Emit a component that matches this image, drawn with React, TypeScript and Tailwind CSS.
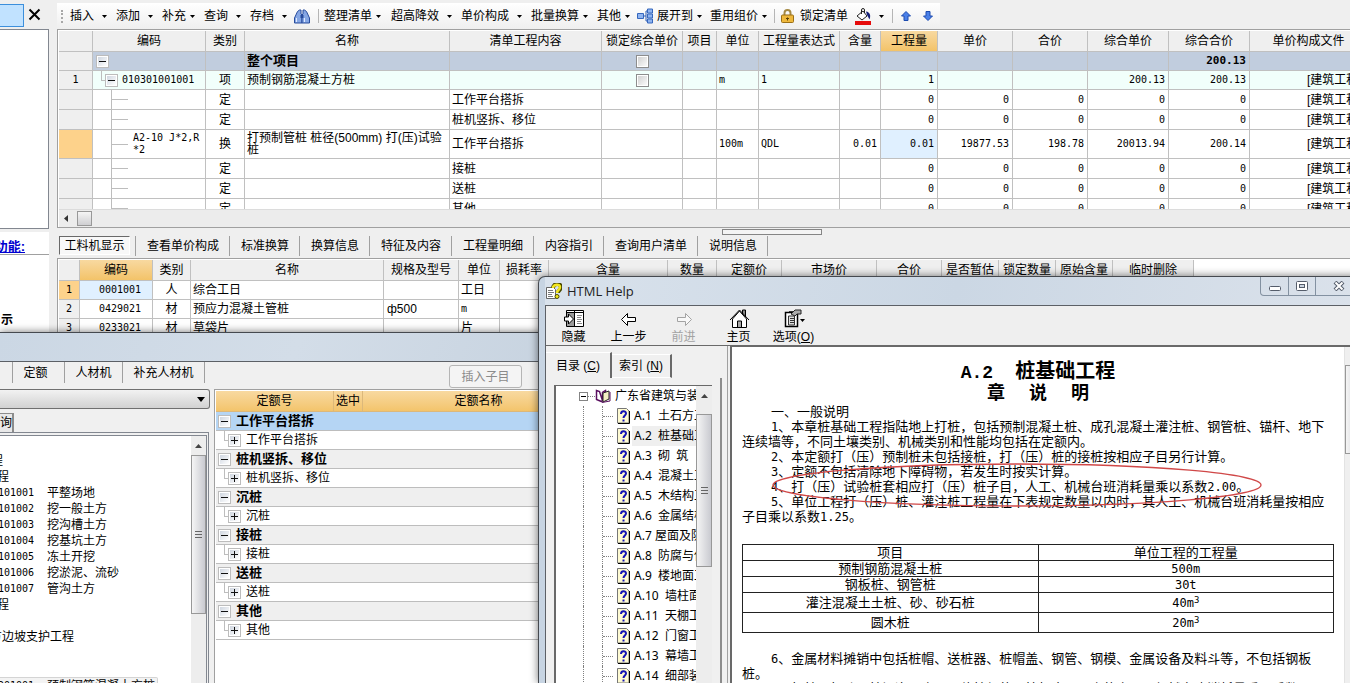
import type { ReactNode } from "react";
import clsx from "clsx";

const tools = [
  { label: "插入", width: "w-[46px]", gap: "gap-2" },
  { label: "添加", width: "w-[46px]", gap: "gap-2" },
  { label: "补充", width: "w-[42px]", gap: "gap-1" },
  { label: "查询", width: "w-[46px]", gap: "gap-2" },
  { label: "存档", width: "w-[44px]", gap: "gap-2" },
];

const moreTools = [
  { label: "整理清单", width: "w-[67px]", gap: "gap-1" },
  { label: "超高降效", width: "w-[70px]", gap: "gap-2" },
  { label: "单价构成", width: "w-[70px]", gap: "gap-2" },
  { label: "批量换算", width: "w-[66px]", gap: "gap-1" },
  { label: "其他", width: "w-[40px]", gap: "gap-1" },
];

const billColumns = [
  { title: "", width: "w-[34px]" },
  { title: "编码", width: "w-[113px]" },
  { title: "类别", width: "w-[39px]" },
  { title: "名称", width: "w-[205px]" },
  { title: "清单工程内容", width: "w-[152px]" },
  { title: "锁定综合单价", width: "w-[81px]" },
  { title: "项目", width: "w-[34px]" },
  { title: "单位", width: "w-[42px]" },
  { title: "工程量表达式", width: "w-[81px]" },
  { title: "含量", width: "w-[41px]" },
  { title: "工程量", width: "w-[57px]", active: true },
  { title: "单价", width: "w-[75px]" },
  { title: "合价", width: "w-[75px]" },
  { title: "综合单价", width: "w-[81px]" },
  { title: "综合合价", width: "w-[81px]" },
  { title: "单价构成文件", width: "w-[118px]" },
];

type BillRow = {
  level: "root" | "item" | "quota";
  no?: string;
  code?: ReactNode;
  kind?: string;
  name?: ReactNode;
  content?: string;
  unit?: string;
  expr?: string;
  ratio?: string;
  nums: string[];
  file?: string;
  current?: boolean;
};

const zeros = ["0", "0", "0", "0", "0"];

const billRows: BillRow[] = [
  { level: "root", name: "整个项目", nums: ["", "", "", "", "200.13"] },
  {
    level: "item",
    no: "1",
    code: "010301001001",
    kind: "项",
    name: "预制钢筋混凝土方桩",
    unit: "m",
    expr: "1",
    nums: ["1", "", "", "200.13", "200.13"],
    file: "[建筑工程]",
  },
  { level: "quota", kind: "定", content: "工作平台搭拆", nums: zeros, file: "[建筑工程]" },
  { level: "quota", kind: "定", content: "桩机竖拆、移位", nums: zeros, file: "[建筑工程]" },
  {
    level: "quota",
    code: (
      <>
        A2-10 J*2,R
        <br />
        *2
      </>
    ),
    kind: "换",
    name: (
      <>
        打预制管桩 桩径(500mm) 打(压)试验
        <br />桩
      </>
    ),
    content: "工作平台搭拆",
    unit: "100m",
    expr: "QDL",
    ratio: "0.01",
    nums: ["0.01", "19877.53", "198.78", "20013.94", "200.14"],
    file: "[建筑工程]",
    current: true,
  },
  { level: "quota", kind: "定", content: "接桩", nums: zeros, file: "[建筑工程]" },
  { level: "quota", kind: "定", content: "送桩", nums: zeros, file: "[建筑工程]" },
  { level: "quota", kind: "定", content: "其他", nums: zeros, file: "[建筑工程]" },
];

const detailTabs = [
  "查看单价构成",
  "标准换算",
  "换算信息",
  "特征及内容",
  "工程量明细",
  "内容指引",
  "查询用户清单",
  "说明信息",
];

const resourceColumns = [
  { title: "", width: "w-[21px]" },
  { title: "编码", width: "w-[73px]", active: true },
  { title: "类别", width: "w-[38px]" },
  { title: "名称", width: "w-[193px]" },
  { title: "规格及型号", width: "w-[75px]" },
  { title: "单位", width: "w-[41px]" },
  { title: "损耗率", width: "w-[49px]" },
  { title: "含量", width: "w-[119px]" },
  { title: "数量", width: "w-[49px]" },
  { title: "定额价", width: "w-[65px]" },
  { title: "市场价", width: "w-[95px]" },
  { title: "合价", width: "w-[65px]" },
  { title: "是否暂估", width: "w-[57px]" },
  { title: "锁定数量", width: "w-[57px]" },
  { title: "原始含量", width: "w-[57px]" },
  { title: "临时删除", width: "w-[81px]" },
];

const resources = [
  { code: "0001001", kind: "人", name: "综合工日", spec: "", unit: "工日" },
  { code: "0429021", kind: "材", name: "预应力混凝土管桩", spec: "ф500", unit: "m" },
  { code: "0233021", kind: "材", name: "草袋片", spec: "", unit: "片" },
];

const quotaGroups = ["工作平台搭拆", "桩机竖拆、移位", "沉桩", "接桩", "送桩", "其他"];

const listItems = [
  { code: "101001", name: "平整场地" },
  { code: "101002", name: "挖一般土方" },
  { code: "101003", name: "挖沟槽土方" },
  { code: "101004", name: "挖基坑土方" },
  { code: "101005", name: "冻土开挖" },
  { code: "101006", name: "挖淤泥、流砂" },
  { code: "101007", name: "管沟土方" },
];

const chapters = [
  ["A.1", "土石方工程"],
  ["A.2", "桩基础工程"],
  ["A.3", "砌  筑"],
  ["A.4", "混凝土工程"],
  ["A.5", "木结构工程"],
  ["A.6", "金属结构"],
  ["A.7", "屋面及防水"],
  ["A.8", "防腐与保温"],
  ["A.9", "楼地面工程"],
  ["A.10", "墙柱面工程"],
  ["A.11", "天棚工程"],
  ["A.12", "门窗工程"],
  ["A.13", "幕墙工程"],
  ["A.14", "细部装饰"],
];

const monoFamily = "font-['DejaVu_Sans_Mono','Noto_Sans_CJK_SC',monospace]";
const mono = `${monoFamily} text-[10px]`;
const headActive = "bg-linear-to-b from-[#f8d9a0] to-[#f3c368]";

function Caret() {
  return (
    <svg width="5" height="3" viewBox="0 0 5 3" aria-hidden="true">
      <path d="M0 0h5L2.5 3z" fill="#000" />
    </svg>
  );
}

function ToolButton({ label, width, gap }: { label: string; width: string; gap: string }) {
  return (
    <button type="button" className={clsx("flex shrink-0 items-center", width, gap)}>
      {label}
      <Caret />
    </button>
  );
}

function Divider() {
  return <span className="h-[14px] w-px shrink-0 bg-[#b5b5b5]" />;
}

function Toggle({ open, label }: { open: boolean; label: string }) {
  return (
    <button
      type="button"
      aria-label={label}
      aria-expanded={open}
      className="size-[13px] shrink-0 border border-[#bcbcbc] bg-white p-px"
    >
      <svg width="9" height="9" viewBox="0 0 9 9" className="bg-linear-to-br from-[#cfd6e0] to-white">
        <path d={open ? "M1 4.5h7" : "M1 4.5h7M4.5 1v7"} stroke="#111" fill="none" />
      </svg>
    </button>
  );
}

function LockBox({ label }: { label: string }) {
  return (
    <input
      type="checkbox"
      aria-label={label}
      className="size-[13px] appearance-none border border-[#8d8d8d] bg-linear-to-br from-[#cdcdcd] to-white shadow-[inset_0_0_0_1px_#fff]"
    />
  );
}

function Toolbar() {
  return (
    <div className="mt-[3px] flex h-[26px] w-[883px] shrink-0 items-center bg-linear-to-b from-white to-[#efefef] pl-1 whitespace-nowrap">
      <span className="mr-[7px] h-[13px] w-[2px] border-l-2 border-dotted border-[#a8a8a8]" />
      {tools.map((tool) => (
        <ToolButton key={tool.label} {...tool} />
      ))}
      <button type="button" aria-label="查找" className="mr-2 shrink-0">
        <svg width="16" height="15" viewBox="0 0 16 15">
          <path d="M3.500 2.500l2-1.500h1.500v4l1 1v8H.5V9z" fill="#86a7e4" stroke="#274b9c" />
          <path d="M12.500 2.500L10.500 1H9v4L8 6v8h7.500V9z" fill="#86a7e4" stroke="#274b9c" />
          <path d="M6.500 6h3v3h-3z" fill="#274b9c" />
          <path d="M2.500 9v4M10.500 9v4" stroke="#dfe9ff" />
        </svg>
      </button>
      <Divider />
      <span className="w-[5px] shrink-0" />
      {moreTools.map((tool) => (
        <ToolButton key={tool.label} {...tool} />
      ))}
      <svg width="16" height="16" viewBox="0 0 16 16" className="mr-1 shrink-0" aria-hidden="true">
        <path d="M6 8h3M9 8V3h1M9 8v5h1" stroke="#2f5fb5" fill="none" />
        <path d="M.5 5.500h6v5h-6zM10.500 1h5v4h-5zM10.500 6h5v4h-5zM10.500 11h5v4h-5z" fill="#8fb4f0" stroke="#3566bd" />
      </svg>
      <ToolButton label="展开到" width="w-[53px]" gap="gap-1" />
      <ToolButton label="重用组价" width="w-[64px]" gap="gap-1" />
      <Divider />
      <button type="button" className="ml-[6px] flex shrink-0 items-center gap-[6px]">
        <svg width="13" height="14" viewBox="0 0 13 14" aria-hidden="true">
          <path d="M3.500 7V4a3 3 0 0 1 6 0v3" fill="none" stroke="#a58a45" strokeWidth="2" />
          <rect x=".5" y="6" width="12" height="7.500" rx="1" fill="#eeb83c" stroke="#9a6f16" />
          <path d="M6.500 8.500v3M5 9.500h3" stroke="#5d3f04" />
        </svg>
        锁定清单
      </button>
      <button type="button" aria-label="填充颜色" className="ml-[7px] flex shrink-0 items-center gap-2">
        <svg width="16" height="17" viewBox="0 0 16 17">
          <path d="M2 8l6-5 4 5-5 4z" fill="#fff" stroke="#222" />
          <path d="M6.500 6V2a1.500 1.500 0 0 1 3 0v3" fill="none" stroke="#222" />
          <path d="M11 3.500c4 .5 5 4 3.500 8L12 7z" fill="#16217a" />
          <path d="M0 13h16v4H0z" fill="#e60b0b" />
        </svg>
        <Caret />
      </button>
      <span className="ml-2" />
      <Divider />
      <button type="button" aria-label="上移" className="ml-[8px] shrink-0">
        <svg width="10" height="10" viewBox="0 0 10 10">
          <path d="M5 .5L9.500 5H7v4.500H3V5H.5z" fill="#4a80e8" stroke="#1c4bb0" />
        </svg>
      </button>
      <button type="button" aria-label="下移" className="ml-[12px] shrink-0">
        <svg width="10" height="10" viewBox="0 0 10 10">
          <path d="M5 9.500L.5 5H3V.5h4V5h2.500z" fill="#4a80e8" stroke="#1c4bb0" />
        </svg>
      </button>
    </div>
  );
}

function CodeCell({ row, height }: { row: BillRow; height: string }) {
  if (row.level === "root") {
    return (
      <div className={clsx("flex items-center pl-[3px]", height)}>
        <Toggle open label="整个项目" />
      </div>
    );
  }
  if (row.level === "item") {
    return (
      <div className={clsx("flex items-center pl-2", height)}>
        <span className="h-[10px] w-[4px] self-start border-b border-l border-[#bdbdbd]" />
        <Toggle open label="预制钢筋混凝土方桩" />
        <span className="ml-[4px]">{row.code}</span>
      </div>
    );
  }
  return (
    <div className={clsx("flex items-center pl-[18px] leading-3", height)}>
      <span className="w-px self-stretch bg-[#bdbdbd]" />
      <span className="h-px w-4 shrink-0 bg-[#bdbdbd]" />
      <span className="ml-[5px] whitespace-nowrap">{row.code}</span>
    </div>
  );
}

function BillTable() {
  const cell = "border-r border-b border-[#c0c0c0] p-0";
  return (
    <table className="w-[1309px] table-fixed border-separate border-spacing-0 leading-[14px] whitespace-nowrap">
      <thead>
        <tr>
          {billColumns.map((col) => (
            <th
              key={col.title}
              className={clsx(cell, "h-[21px] font-normal", col.width, col.active ? headActive : "bg-[#efefef]")}
            >
              {col.title}
            </th>
          ))}
        </tr>
      </thead>
      <tbody>
        {billRows.map((row, i) => {
          const height = row.current ? "h-[28px]" : row.level === "quota" ? "h-[19px]" : "h-[18px]";
          return (
            <tr
              key={i}
              className={clsx(
                row.level === "root" && "bg-[#c1cdde] font-bold",
                row.level === "item" && "bg-[#f1fffb]",
                row.level === "quota" && "bg-white"
              )}
            >
              <td className={clsx(cell, mono, "text-center", row.current ? "bg-[#fdd28b]" : "bg-[#efefef]")}>
                {row.no}
              </td>
              <td className={clsx(cell, mono)}>
                <CodeCell row={row} height={height} />
              </td>
              <td className={clsx(cell, "text-center")}>{row.kind}</td>
              <td className={clsx(cell, "pl-[2px] leading-3", row.level === "root" && "text-[13px]")}>{row.name}</td>
              <td className={clsx(cell, "pl-[2px]")}>{row.content}</td>
              <td className={cell}>
                <div className="flex justify-center">
                  {row.level !== "quota" && <LockBox label="锁定综合单价" />}
                </div>
              </td>
              <td className={cell} />
              <td className={clsx(cell, mono, "pl-[2px]")}>{row.unit}</td>
              <td className={clsx(cell, mono, "pl-[2px]")}>{row.expr}</td>
              <td className={clsx(cell, mono, "pr-[3px] text-right")}>{row.ratio}</td>
              {row.nums.map((value, n) => (
                <td
                  key={n}
                  className={clsx(
                    cell,
                    monoFamily,
                    "pr-[3px] text-right",
                    row.level === "root" ? "text-[11px]" : "text-[10px]",
                    row.current && n === 0 && "bg-[#e0f0ff]"
                  )}
                >
                  {value}
                </td>
              ))}
              <td className={clsx(cell, "pl-[57px]")}>{row.file}</td>
            </tr>
          );
        })}
      </tbody>
    </table>
  );
}

function ResourceTable() {
  const cell = "border-r border-b border-[#c0c0c0] p-0";
  return (
    <table className="w-[1135px] table-fixed border-separate border-spacing-0 leading-[14px] whitespace-nowrap">
      <thead>
        <tr>
          {resourceColumns.map((col) => (
            <th
              key={col.title}
              className={clsx(cell, "h-[21px] font-normal", col.width, col.active ? headActive : "bg-[#efefef]")}
            >
              {col.title}
            </th>
          ))}
        </tr>
      </thead>
      <tbody>
        {resources.map((row, i) => (
          <tr key={row.code}>
            <td className={clsx(cell, mono, "h-[19px] text-center", i === 0 ? "bg-[#fdd28b]" : "bg-[#efefef]")}>
              {i + 1}
            </td>
            <td className={clsx(cell, mono, "pl-[19px]", i === 0 && "bg-[#e0f0ff]")}>{row.code}</td>
            <td className={clsx(cell, "text-center")}>{row.kind}</td>
            <td className={clsx(cell, "pl-[2px]")}>{row.name}</td>
            <td className={clsx(cell, "pl-[3px]")}>{row.spec}</td>
            <td className={clsx(cell, "pl-[2px]", row.unit === "m" && mono)}>{row.unit}</td>
            {resourceColumns.slice(6).map((col) => (
              <td key={col.title} className={cell} />
            ))}
          </tr>
        ))}
      </tbody>
    </table>
  );
}

function SidePanel() {
  return (
    <aside className="flex w-[49px] shrink-0 flex-col overflow-hidden">
      <div className="flex h-[29px] shrink-0 items-start gap-1 pt-1">
        <span className="h-[23px] w-6 border border-l-0 border-[#3c8fdc] bg-[#c1e2ff]" />
        <button type="button" aria-label="关闭" className="mt-[4px]">
          <svg width="13" height="13" viewBox="0 0 13 13">
            <path d="M1.500 1.500l10 10M11.500 1.500l-10 10" stroke="#000" strokeWidth="2" />
          </svg>
        </button>
      </div>
      <div className="h-[200px] shrink-0 border border-l-0 border-[#828790] bg-white" />
      <div className="mt-[3px] flex-1 bg-white">
        <div className="flex h-[23px] items-end justify-end border-b border-[#a0a0a0] pr-6">
          <a href="#functions" className="text-[13px] leading-[15px] font-bold whitespace-nowrap text-[#0000d0] underline">
            功能:
          </a>
        </div>
        <p className="mt-[57px] pl-px font-bold">示</p>
      </div>
    </aside>
  );
}

function QuotaTree() {
  return (
    <table className="w-[378px] table-fixed border-separate border-spacing-0 leading-[14px] whitespace-nowrap">
      <thead>
        <tr className={headActive}>
          <th className="h-[21px] w-[118px] border-r border-b border-[#dcb87a] p-0 font-normal">定额号</th>
          <th className="w-[29px] border-r border-b border-[#dcb87a] p-0 font-normal">选中</th>
          <th className="border-b border-[#dcb87a] p-0 font-normal">定额名称</th>
        </tr>
      </thead>
      {quotaGroups.map((name, i) => (
        <tbody key={name}>
          <tr className={i === 0 ? "bg-[#b5d5f4]" : "bg-[#efefef]"}>
            <td colSpan={3} className="border-b border-[#bdbdbd] p-0">
              <div className="flex h-[18px] items-center pl-[2px] text-[13px] font-bold">
                <Toggle open label={name} />
                <span className="ml-[5px]">{name}</span>
              </div>
            </td>
          </tr>
          <tr className="bg-white">
            <td colSpan={3} className="border-b border-[#bdbdbd] p-0">
              <div className="flex h-[18px] items-center pl-2">
                <span className="h-[10px] w-[4px] self-start border-b border-l border-[#bdbdbd]" />
                <Toggle open={false} label={name} />
                <span className="ml-[5px]">{name}</span>
              </div>
            </td>
          </tr>
        </tbody>
      ))}
    </table>
  );
}

function ScrollArrow() {
  return (
    <svg width="7" height="4" viewBox="0 0 7 4" aria-hidden="true">
      <path d="M0 4L3.500 0 7 4z" fill="#444" />
    </svg>
  );
}

function Thumb({ height }: { height: string }) {
  return (
    <span
      className={clsx(
        "flex w-full shrink-0 flex-col items-center justify-center gap-[2px] border border-[#989898] bg-linear-to-r from-[#f5f5f5] to-[#c9cad0]",
        height
      )}
    >
      <i className="h-px w-[7px] bg-[#666]" />
      <i className="h-px w-[7px] bg-[#666]" />
      <i className="h-px w-[7px] bg-[#666]" />
    </span>
  );
}

function QueryWindow() {
  return (
    <section className="absolute top-[332px] bottom-0 left-0 flex w-[594px] flex-col overflow-hidden border-t border-[#45494f] bg-[#f0f0f0] shadow-[0_0_8px_rgba(0,0,0,0.55)]">
      <div className="h-[29px] shrink-0 border-b border-[#5c6066] bg-linear-[110deg] from-[#cbd7e4] via-[#d3dde8] to-[#c6d2df]" />
      <div className="flex h-[27px] shrink-0 items-start">
        <div className="flex h-[21px] flex-1 leading-5">
          <span className="w-[13px] border-r border-[#a0a0a0]" />
          <button type="button" className="w-[52px] border-r border-[#a0a0a0] pr-[6px]">
            定额
          </button>
          <button type="button" className="w-[58px] border-r border-[#a0a0a0]">
            人材机
          </button>
          <button type="button" className="w-[82px] border-r border-[#a0a0a0]">
            补充人材机
          </button>
        </div>
        <button
          type="button"
          disabled
          className="mt-[3px] mr-[72px] h-[23px] w-[73px] rounded-[3px] border border-[#b5b5b5] bg-[#f4f4f4] text-[#8b8b8b]"
        >
          插入子目
        </button>
      </div>
      <div className="flex min-h-0 flex-1">
        <div className="flex w-[210px] shrink-0 flex-col">
          <div className="flex h-5 shrink-0 items-center rounded-r-[3px] border border-l-0 border-[#707070] bg-linear-to-b from-[#f2f2f2] to-[#d2d2d2] pr-1">
            <select aria-label="专业" className="h-full flex-1 appearance-none">
              <option></option>
            </select>
            <svg width="8" height="5" viewBox="0 0 8 5" aria-hidden="true">
              <path d="M0 0h8L4 5z" fill="#000" />
            </svg>
          </div>
          <button
            type="button"
            className="mt-1 flex h-[19px] w-[14px] shrink-0 items-center justify-end overflow-hidden border-t border-r-2 border-[#8c8c8c] bg-[#e8e8e8] whitespace-nowrap"
          >
            查询
          </button>
          <div className="mr-px flex min-h-0 flex-1 border-t border-r border-[#828790] pt-[2px] pr-px">
            <div className="flex min-w-0 flex-1 border-t border-r border-[#828790] bg-white">
              <ul className="min-w-0 flex-1 overflow-hidden pt-[17px] leading-4 whitespace-nowrap">
                <li className="flex w-[3px] justify-end overflow-hidden">程</li>
                <li className="flex w-[9px] justify-end overflow-hidden">程</li>
                {listItems.map((item) => (
                  <li key={item.code} className="flex h-4">
                    <span className={clsx(mono, "flex w-[34px] justify-end overflow-hidden")}>{item.code}</span>
                    <span className="ml-[13px]">{item.name}</span>
                  </li>
                ))}
                <li className="flex w-[9px] justify-end overflow-hidden">程</li>
                <li className="h-4" />
                <li className="flex w-[74px] justify-end overflow-hidden">土方边坡支护工程</li>
                <li className="h-8" />
                <li className="flex w-[158px] rounded-r-[2px] border border-l-0 border-[#d4d4d4] bg-[#f3f3f3]">
                  <span className={clsx(mono, "flex w-[34px] justify-end overflow-hidden")}>201001</span>
                  <span className="ml-[13px]">预制钢筋混凝土方桩</span>
                </li>
              </ul>
              <div className="flex w-[15px] shrink-0 flex-col items-center bg-[#ededed] pt-2">
                <ScrollArrow />
                <span className="h-[7px]" />
                <Thumb height="h-[159px]" />
              </div>
            </div>
          </div>
        </div>
        <div className="ml-[4px] flex-1 border-t border-l border-[#a0a0a0] bg-white pt-px pl-px">
          <QuotaTree />
        </div>
      </div>
    </section>
  );
}

function HelpIcon() {
  return (
    <svg width="16" height="16" viewBox="0 0 16 16" aria-hidden="true">
      <path d="M.5 4.500h7l2 2v9h-9z" fill="#fff" stroke="#666" />
      <path d="M2 7.500h5M2 9.500h6M2 11.500h4M2 13.500h5" stroke="#777" />
      <path d="M7 5c0-5 8-5 8-1 0 3-3 3-3 6" fill="none" stroke="#4a4a00" strokeWidth="4" />
      <path d="M7 5c0-4 7-4.500 7-1 0 3-3 3-3 6" fill="none" stroke="#f2e51e" strokeWidth="2.500" />
      <circle cx="11" cy="13.500" r="2" fill="#f2e51e" stroke="#4a4a00" />
    </svg>
  );
}

function TopicIcon() {
  return (
    <svg width="13" height="16" viewBox="0 0 13 16" className="shrink-0" aria-hidden="true">
      <path d="M.5 .5h9l2.500 2.500v12H.5z" fill="#fffbd2" stroke="#777" />
      <path d="M12.500 3v12.500H1" fill="none" stroke="#000" />
      <path d="M4 6c0-3.500 5-3.500 5-.5C9 7.500 6.500 7.500 6.500 10" fill="none" stroke="#1414b4" strokeWidth="2" />
      <path d="M5.500 11.500h2v2h-2z" fill="#1414b4" />
    </svg>
  );
}

type HelpButtonProps = { label: string; hotkey?: string; disabled?: boolean; children: ReactNode };

function HelpButton({ label, hotkey, disabled, children }: HelpButtonProps) {
  return (
    <button
      type="button"
      disabled={disabled}
      className="flex w-[55px] flex-col items-center gap-px whitespace-nowrap disabled:text-[#a3a3a3]"
    >
      <svg width="24" height="20" viewBox="0 0 24 20" fill="none" aria-hidden="true">
        {children}
      </svg>
      <span className="leading-4">
        {label}
        {hotkey && (
          <>
            (<u>{hotkey}</u>)
          </>
        )}
      </span>
    </button>
  );
}

function HelpToolbar() {
  return (
    <div className="flex h-[40px] shrink-0 items-start border-b border-[#6a6a6a] bg-[#efefef] pt-[2px]">
      <HelpButton label="隐藏">
        <path d="M4.500 2.500h17v16h-17z" fill="#fff" stroke="#000" />
        <path d="M4 4.500h18M12.500 3v15" stroke="#000" />
        <path d="M5 5h7v13H5z" fill="#9a9a9a" />
        <path d="M15 7.500h5M15 9.500h4M15 11.500h5M15 13.500h4M15 15.500h5" stroke="#888" />
        <path d="M2.500 9h4V6l5 5-5 5v-3h-4z" fill="#fff" stroke="#000" />
      </HelpButton>
      <HelpButton label="上一步">
        <path d="M4.500 11.500l6-6v4h8v4h-8v4z" fill="#fff" stroke="#000" />
      </HelpButton>
      <HelpButton label="前进" disabled>
        <path d="M19.500 11.500l-6-6v4h-8v4h8v4z" fill="#f8f8f8" stroke="#a3a3a3" />
      </HelpButton>
      <HelpButton label="主页">
        <path d="M15.500 6V2h3v7" fill="#888" stroke="#000" />
        <path d="M5.500 11v8.500h14V11l-7-8z" fill="#fff" stroke="#000" />
        <path d="M3 12l9.500-10L22 12" stroke="#000" />
        <path d="M10.500 19v-6h4v6" fill="#aaa" stroke="#000" />
      </HelpButton>
      <HelpButton label="选项" hotkey="O">
        <path d="M3.500 4.500h12v14h-12z" fill="#fff" stroke="#000" strokeWidth="1.500" />
        <path d="M7 3.500h4M6.500 8v9h6V8z" fill="#ddd" stroke="#333" />
        <path d="M8 10.500h4M8 12.500h4M8 14.500h4" stroke="#333" />
        <path d="M9 6l4-4h6v4h-4l-2 2z" fill="#aaa" stroke="#222" />
        <path d="M18 11h5l-2.500 3z" fill="#000" />
      </HelpButton>
    </div>
  );
}

function HelpContents() {
  return (
    <div className="flex w-[181px] shrink-0 flex-col pt-[6px] pr-[5px] whitespace-nowrap">
      <div className="flex h-[26px] shrink-0 items-stretch">
        <button type="button" className="w-[66px] border-t border-r-2 border-t-white border-r-[#696969] bg-[#f0f0f0]">
          目录 (<u>C</u>)
        </button>
        <button
          type="button"
          className="mt-[2px] w-[60px] border-t border-r-2 border-b border-t-white border-r-[#696969] border-b-white bg-[#f0f0f0]"
        >
          索引 (<u>N</u>)
        </button>
      </div>
      <div className="flex min-h-0 flex-1 border-r-2 border-[#8c8c8c] pt-[7px] pr-2 pl-2">
        <div className="flex min-w-0 flex-1 border-t border-l-2 border-[#696969] bg-white">
          <ul className="min-w-0 flex-1 overflow-hidden font-['Noto_Sans','Noto_Sans_CJK_SC',sans-serif] leading-5">
            <li className="flex h-5 items-center pl-[23px]">
              <button
                type="button"
                aria-label="收起目录"
                className="flex size-[9px] shrink-0 items-center justify-center border border-[#848484]"
              >
                <i className="h-px w-[5px] bg-black" />
              </button>
              <span className="w-[7px] shrink-0 border-t border-dotted border-[#808080]" />
              <svg width="16" height="14" viewBox="0 0 16 14" className="mr-[4px] shrink-0" aria-hidden="true">
                <path d="M1.500 1.500l3 1 3 9-1 1-5-2zM7.500 11.500V3.500l3-2 1 8z" fill="#fff" stroke="#5a1060" strokeWidth="1.500" />
                <path d="M8 4l6-2v8l-6 3z" fill="#f5efc4" stroke="#222" />
                <path d="M15 3v9l-8 1.500" stroke="#5a1060" fill="none" />
              </svg>
              <span>广东省建筑与装饰</span>
            </li>
            {chapters.map(([no, title], i) => (
              <li key={no} className="flex h-5 items-center pl-[27px]">
                <span className="w-[19px] shrink-0 self-stretch border-l border-dotted border-[#808080]" />
                <span className="flex shrink-0 items-center self-stretch border-l border-dotted border-[#808080]">
                  <i className="mr-1 w-[10px] border-t border-dotted border-[#808080]" />
                </span>
                <TopicIcon />
                <a
                  href={`#${no}`}
                  className={clsx("ml-[2px] flex-1 pl-[2px] whitespace-pre", i === 1 && "bg-[#efefef]")}
                >
                  {no}
                  {i === 6 ? " " : "  "}
                  {title}
                </a>
              </li>
            ))}
          </ul>
          <div className="flex w-4 shrink-0 flex-col items-center bg-[#ededed] pt-2">
            <ScrollArrow />
            <span className="h-4 shrink-0" />
            <Thumb height="h-[153px]" />
          </div>
        </div>
      </div>
    </div>
  );
}

function Latin({ children }: { children: ReactNode }) {
  return <span className="font-['DejaVu_Sans_Mono',monospace] text-[12px] leading-none">{children}</span>;
}

function HelpDocument() {
  const cell = "border border-[#222] p-0 text-center font-normal";
  return (
    <article className="relative min-w-0 flex-1 overflow-hidden bg-white px-[10px] pt-[13px] text-[13px] leading-[15px] whitespace-nowrap">
      <h1 className="h-[22px] text-center text-[20px] leading-[22px] font-bold whitespace-pre">
        <span className="font-['Liberation_Mono',monospace] text-[18px] leading-none">A.2</span>
        {"    "}桩基础工程
      </h1>
      <h2 className="flex h-[22px] justify-center gap-6 text-[18px] leading-[22px] font-bold">
        <span>章</span>
        <span>说</span>
        <span>明</span>
      </h2>
      <div>
        <p className="pl-[29px]">一、一般说明</p>
        <p className="pl-[29px]">
          <Latin>1</Latin>、本章桩基础工程指陆地上打桩，包括预制混凝土桩、成孔混凝土灌注桩、钢管桩、锚杆、地下
        </p>
        <p>连续墙等，不同土壤类别、机械类别和性能均包括在定额内。</p>
        <p className="pl-[29px]">
          <Latin>2</Latin>、本定额打（压）预制桩未包括接桩，打（压）桩的接桩按相应子目另行计算。
        </p>
        <p className="pl-[29px]">
          <Latin>3</Latin>、定额不包括清除地下障碍物，若发生时按实计算。
        </p>
        <p className="pl-[29px]">
          <Latin>4</Latin>、打（压）试验桩套相应打（压）桩子目，人工、机械台班消耗量乘以系数<Latin>2.00</Latin>。
        </p>
        <p className="pl-[29px]">
          <Latin>5</Latin>、单位工程打（压）桩、灌注桩工程量在下表规定数量以内时，其人工、机械台班消耗量按相应
        </p>
        <p>
          子目乘以系数<Latin>1.25</Latin>。
        </p>
      </div>
      <table className="mt-5 w-full table-fixed border-collapse border border-black">
        <thead>
          <tr className="h-4">
            <th className={cell}>项目</th>
            <th className={cell}>单位工程的工程量</th>
          </tr>
        </thead>
        <tbody>
          <tr className="h-4">
            <td className={cell}>预制钢筋混凝土桩</td>
            <td className={cell}>
              <Latin>500m</Latin>
            </td>
          </tr>
          <tr className="h-4">
            <td className={cell}>钢板桩、钢管桩</td>
            <td className={cell}>
              <Latin>30t</Latin>
            </td>
          </tr>
          <tr className="h-5">
            <td className={cell}>灌注混凝土土桩、砂、砂石桩</td>
            <td className={cell}>
              <Latin>
                40m<sup>3</sup>
              </Latin>
            </td>
          </tr>
          <tr className="h-5">
            <td className={cell}>圆木桩</td>
            <td className={cell}>
              <Latin>
                20m<sup>3</sup>
              </Latin>
            </td>
          </tr>
        </tbody>
      </table>
      <div className="mt-[18px]">
        <p className="pl-[29px]">
          <Latin>6</Latin>、金属材料摊销中包括桩帽、送桩器、桩帽盖、钢管、钢模、金属设备及料斗等，不包括钢板
        </p>
        <p>桩。</p>
        <p className="pl-[29px]">
          <Latin>7</Latin>、打桩、打孔，桩间净距小于四倍桩径的，按相应子目中的人工、机械台班消耗量乘以系数
        </p>
      </div>
      {/* reviewer's mark around clause 4 */}
      <svg
        width="492"
        height="46"
        viewBox="0 0 492 46"
        className="pointer-events-none absolute top-[115px] left-[39px]"
        aria-hidden="true"
      >
        <ellipse cx="246" cy="23" rx="244" ry="21" fill="none" stroke="#d04848" strokeWidth="1.300" />
      </svg>
    </article>
  );
}

function HelpWindow() {
  return (
    <section className="absolute top-[276px] -right-[18px] bottom-0 left-[538px] flex flex-col overflow-hidden rounded-tl-[7px] border-t border-l border-[#45494f] bg-[#c7d4e2] pl-[6px] shadow-[0_0_8px_rgba(0,0,0,0.55)]">
      <header className="flex h-[28px] shrink-0 items-start bg-linear-[100deg] from-[#d9e2ec] via-[#cbd7e4] to-[#dbe2eb] pr-[5px] pl-px">
        <span className="mt-[6px]">
          <HelpIcon />
        </span>
        <h2 className="mt-[4px] ml-[5px] flex-1 font-['Open_Sans',sans-serif] text-[13px] leading-5 text-[#222]">
          HTML Help
        </h2>
        <div className="flex h-[19px] rounded-b-[4px] border border-t-0 border-[#8391a1]">
          <button type="button" aria-label="最小化" className="flex w-[28px] items-center justify-center border-r border-[#8391a1]">
            <svg width="12" height="12" viewBox="0 0 12 12">
              <rect x=".5" y="6.500" width="11" height="4" rx="1" fill="#fff" stroke="#555d6b" />
            </svg>
          </button>
          <button type="button" aria-label="最大化" className="flex w-[27px] items-center justify-center border-r border-[#8391a1]">
            <svg width="12" height="10" viewBox="0 0 12 10">
              <rect x=".5" y=".5" width="11" height="9" rx="1" fill="#fff" stroke="#555d6b" />
              <rect x="3.500" y="3.500" width="5" height="3" fill="#ccd6e2" stroke="#555d6b" />
            </svg>
          </button>
          <button type="button" aria-label="关闭" className="flex w-[46px] items-center justify-center">
            <svg width="12" height="10" viewBox="0 0 12 10">
              <path d="M2 1l8 8M10 1L2 9" stroke="#555d6b" strokeWidth="4" />
              <path d="M2.500 1.500l7 7M9.500 1.500l-7 7" stroke="#fff" strokeWidth="2" />
            </svg>
          </button>
        </div>
      </header>
      <div className="mr-[6px] flex min-h-0 flex-1 flex-col border-t border-l border-[#5c6066] bg-[#f0f0f0]">
        <HelpToolbar />
        <div className="flex min-h-0 flex-1">
          <HelpContents />
          <div className="flex min-w-0 flex-1 border-l border-[#a0a0a0] pl-[2px]">
            <div className="flex min-w-0 flex-1 border-t border-l-2 border-[#696969]">
              <HelpDocument />
              <div className="flex w-[18px] shrink-0 flex-col items-center border-l border-[#e3e3e3] bg-[#efefef] pt-[9px]">
                <ScrollArrow />
                <span className="h-[5px] shrink-0" />
                <Thumb height="h-[89px]" />
              </div>
            </div>
          </div>
        </div>
      </div>
    </section>
  );
}

export default function App() {
  return (
    <div className="relative flex h-screen overflow-hidden bg-[#efefef] font-['Liberation_Sans','Noto_Sans_CJK_SC',sans-serif] text-[12px] leading-4 text-black">
      <SidePanel />
      <main className="ml-2 flex min-w-0 flex-1 flex-col">
        <Toolbar />
        <div className="flex shrink-0 flex-col border-t border-b border-l border-[#a0a0a0] bg-white pt-px pl-px">
          <div className="h-[178px] overflow-hidden">
            <BillTable />
          </div>
          <div className="flex h-[18px] items-center border-t border-[#dcdcdc] bg-[#ececec] pl-[5px]">
            <svg width="4" height="7" viewBox="0 0 4 7" aria-hidden="true">
              <path d="M4 0L0 3.500 4 7z" fill="#333" />
            </svg>
            <span className="ml-[9px] h-[15px] w-[15px] border border-[#989898] bg-linear-to-b from-[#f5f5f5] to-[#cfcfd2]" />
          </div>
        </div>
        <div className="flex h-[7px] shrink-0 items-center justify-center">
          <span className="mr-[-136px] h-[6px] w-[100px] border border-[#858585] bg-[#f4f4f4]" />
        </div>
        <nav className="flex h-[23px] shrink-0 items-start pt-px pl-[2px] whitespace-nowrap">
          <button
            type="button"
            className="h-[19px] w-[71px] border border-[#fff] border-t-[#696969] border-l-[#696969] bg-[#f8f8f8] leading-[19px]"
          >
            工料机显示
          </button>
          <span className="ml-[5px] h-5 w-px bg-[#a0a0a0]" />
          {detailTabs.map((tab) => (
            <button key={tab} type="button" className="h-5 border-r border-[#a0a0a0] pr-[10px] pl-[11px] leading-5">
              {tab}
            </button>
          ))}
        </nav>
        <div className="min-h-0 flex-1 overflow-hidden border-t border-l border-[#a0a0a0] bg-white pt-px pl-px">
          <ResourceTable />
        </div>
      </main>
      <QueryWindow />
      <HelpWindow />
    </div>
  );
}
